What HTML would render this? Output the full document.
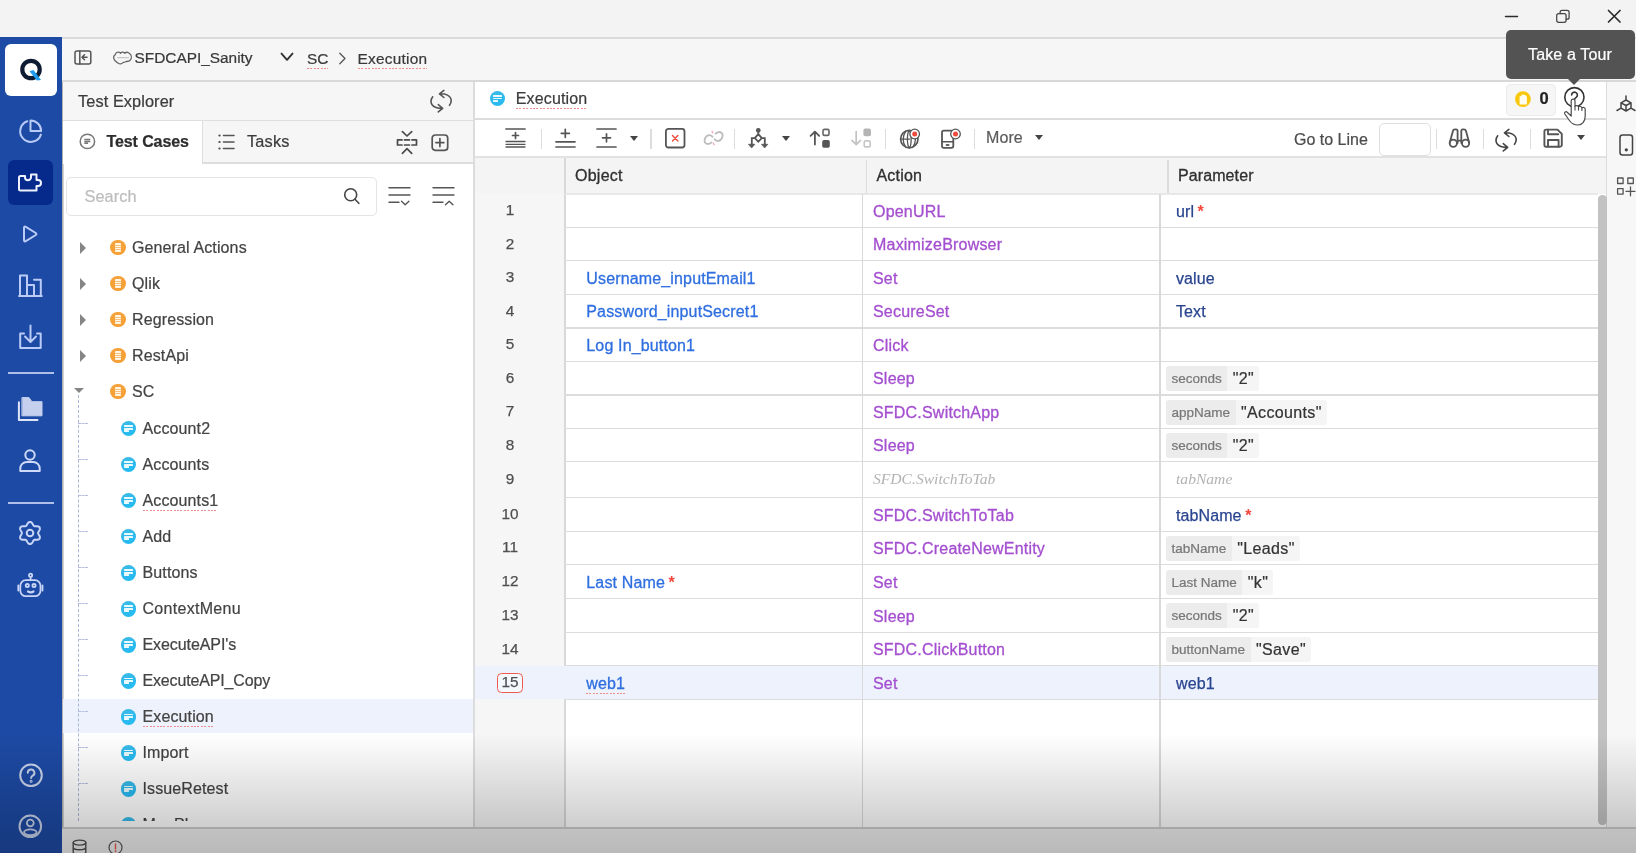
<!DOCTYPE html>
<html>
<head>
<meta charset="utf-8">
<title>Execution</title>
<style>
*{box-sizing:border-box;margin:0;padding:0}
html,body{width:1636px;height:853px;overflow:hidden}
body{font-family:"Liberation Sans",sans-serif;font-size:16px;color:#3a3a3a;background:#f3f3f3;position:relative}
.abs{position:absolute}
.t{position:absolute;white-space:pre;line-height:20px;height:20px}
svg{position:absolute;overflow:visible}
.sq{height:22px!important;background-image:repeating-linear-gradient(90deg,#ef8d8d 0,#ef8d8d 2px,transparent 2px,transparent 3.4px);background-size:100% 1.2px;background-repeat:no-repeat;background-position:0 19.3px}
#sb{left:0;top:37px;width:62px;height:816px;background:#1d4aa4}
#sb svg{fill:none;stroke:#dfe6f7;stroke-width:2;stroke-linecap:round;stroke-linejoin:round}
.ic{fill:none;stroke:#555;stroke-width:1.5;stroke-linecap:round;stroke-linejoin:round}
.tr{position:absolute;left:63px;width:410px;height:36px}
.tr .lbl{position:absolute;top:9px;line-height:20px;white-space:pre;color:#444;letter-spacing:.12px}
.fo{position:absolute;width:15.6px;height:15.6px;border-radius:50%;background:radial-gradient(circle at 50% 40%,#f4a444 0,#f5a033 70%,#f39a22 100%);left:47.3px;top:10.2px}
.fo:after{content:"";position:absolute;left:4.6px;top:3.3px;width:6.6px;height:9px;border-radius:1px;background:linear-gradient(to bottom,#fff6e6 0,#fff6e6 1.9px,#f8c27c 1.9px,#f8c27c 2.7px,#fff6e6 2.7px,#fff6e6 4.1px,#f8c27c 4.1px,#f8c27c 4.9px,#fff6e6 4.9px,#fff6e6 6.3px,#f8c27c 6.3px,#f8c27c 7.1px,#fff6e6 7.1px)}
.tc{position:absolute;width:15.6px;height:15.6px;border-radius:50%;background:linear-gradient(160deg,#3dbbe6 0,#2cb9ee 60%,#22bdf2 100%);left:57.7px;top:11.2px}
.tc i{position:absolute;left:3.5px;height:1.7px;background:#e9fbff;border-radius:.5px}
.ar{position:absolute;left:17px;top:12.3px;width:0;height:0;border-left:6.5px solid #858585;border-top:6.2px solid transparent;border-bottom:6.2px solid transparent}
.dash{position:absolute;left:15px;top:13.5px;width:10px;border-top:1px dashed #b4c0de}
.num{position:absolute;left:475px;width:70px;text-align:center;color:#4f4f4f;font-size:15.3px;-webkit-text-stroke:.25px #4f4f4f;line-height:20px;height:20px}
.obj{position:absolute;left:586.3px;color:#2f6fe0;letter-spacing:.15px;-webkit-text-stroke:.3px #2f6fe0;line-height:20px;height:20px;white-space:pre}
.act{position:absolute;left:873px;color:#a44fd0;letter-spacing:.2px;-webkit-text-stroke:.3px #a44fd0;line-height:20px;height:20px;white-space:pre}
.par{position:absolute;left:1176px;color:#2a4590;letter-spacing:.1px;-webkit-text-stroke:.25px #2a4590;line-height:20px;height:20px;white-space:pre}
.star{-webkit-text-stroke:0;color:#f4453a;font-size:16px;font-weight:700;margin-left:3.5px}
.chip{position:absolute;left:1166px;height:25px;border-radius:3px;background:#f5f5f5;display:flex;align-items:center;white-space:pre}
.chip b{font-weight:400;font-size:13.5px;color:#777;background:#ececec;height:25px;line-height:25px;padding:0 5.5px;border-radius:3px 0 0 3px}
.chip span{font-size:16px;color:#333;padding:0 5px 0 5.5px;line-height:25px;letter-spacing:.35px}
.hl{position:absolute;left:565px;width:1033px;height:1.3px;background:#dcdcdc}
.vl{position:absolute;top:194px;width:1.3px;height:633px;background:#d9d9d9}
.ital{-webkit-text-stroke:0!important;letter-spacing:0!important;font-family:"Liberation Serif",serif;font-style:italic;color:#b3b3b3;font-size:15.6px}
#all{position:absolute;left:0;top:0;width:1636px;height:853px;overflow:hidden;will-change:transform;-webkit-text-stroke:.22px}
</style>
</head>
<body>
<div id="all">
<!-- title bar -->
<div class="abs" style="left:0;top:0;width:1636px;height:37px;background:#f3f3f3"></div>
<div class="abs" style="left:62px;top:37px;width:1574px;height:1.5px;background:#dadada"></div>
<svg style="left:1500px;top:6px" width="130" height="22" viewBox="0 0 130 22" fill="none" stroke="#2b2b2b" stroke-width="1.5" stroke-linecap="round">
<path d="M5.5 10.5h12"/>
<rect x="56.7" y="7.7" width="9.4" height="8.6" rx="2" stroke-width="1.25" stroke="#444"/><path d="M60.1 7.7V6.4a2 2 0 0 1 2-2h5a2 2 0 0 1 2 2v4.8a2 2 0 0 1-2 2h-1" stroke-width="1.25" stroke="#444"/>
<path d="M108.5 4.5l11.5 11.5M120 4.5l-11.5 11.5" stroke-width="1.7"/>
</svg>
<!-- breadcrumb -->
<div class="abs" style="left:62px;top:38.5px;width:1574px;height:42px;background:#f6f6f6"></div>
<div class="abs" style="left:62px;top:80px;width:1574px;height:1.6px;background:#d8d8d8"></div>
<svg class="ic" style="left:74.3px;top:50px;stroke:#555;stroke-width:1.5" width="18" height="15" viewBox="0 0 18 15"><rect x="1" y="1" width="15.8" height="13" rx="2"/><path d="M5.8 1v13M13 7.3H8.5M10.5 4.8L8 7.3l2.5 2.5"/></svg>
<svg class="ic" style="left:112.5px;top:50.5px;stroke:#666;stroke-width:1.3" width="19" height="14" viewBox="0 0 19 14"><path d="M1.2 8.5C.3 6.5 1 4.5 2.2 3.8 2.5 1.8 4.5.6 6.3 1.3c.6.3 1 .6 1.3.9C8.5 1 10.5.7 11.8 2.2 13 1.2 15.2 1.2 16.6 2.6c1.9 1.6 2.2 4.4.9 6.2-1 1.4-2.7 1.8-4.3 1.7-1.2.8-2.4 1-3.2 1-1 1.5-3.2 1.9-4.7.8C3.8 11.2 2 10.2 1.2 8.5z"/><path d="M4.5 6.7h11" style="stroke:#b5b5b5;stroke-width:.9"/></svg>
<div class="t" style="left:134.5px;top:48px;font-size:15.4px;letter-spacing:0">SFDCAPI_Sanity</div>
<svg class="ic" style="left:280px;top:52px;stroke:#333;stroke-width:1.9" width="14" height="10" viewBox="0 0 14 10"><path d="M1.5 1.6L7 7.8l5.5-6.2"/></svg>
<div class="t sq" style="left:307px;top:49px;font-size:15.4px">SC</div>
<svg class="ic" style="left:338px;top:52px;stroke-width:1.3" width="9" height="13" viewBox="0 0 9 13"><path d="M1.8 1.3L7 6.5 1.8 11.7"/></svg>
<div class="t sq" style="left:357.5px;top:49px;font-size:15.4px;letter-spacing:.25px">Execution</div>
<!-- tooltip -->
<div class="abs" style="left:1506px;top:30px;width:129px;height:48.5px;background:#535353;border-radius:5px;z-index:60"></div>
<div class="abs" style="left:1567.4px;top:78px;width:0;height:0;border-left:7px solid transparent;border-right:7px solid transparent;border-top:7.8px solid #535353;z-index:60"></div>
<div class="t" style="left:1528px;top:44.5px;color:#fff;letter-spacing:.15px;z-index:61">Take a Tour</div>

<!-- SIDEBAR -->
<div class="abs" id="sb">
<div class="abs" style="left:5px;top:7px;width:52px;height:52px;background:#fff;border-radius:6px"></div>
<svg style="left:19px;top:20px" width="26" height="28" viewBox="0 0 26 28"><circle cx="12" cy="12.5" r="8.7" style="stroke:#0d1b33;stroke-width:4.2"/><path d="M10.5 14.2l4-1.3 7.5 10.2-4 .3z" style="fill:#1e9cf0;stroke:none"/></svg>
<div class="abs" style="left:8px;top:123.4px;width:45px;height:44.5px;background:#062a8c;border-radius:6px"></div>
<svg style="left:0;top:0;stroke:#b9cbf6" width="62" height="120" viewBox="0 37 62 120"><path d="M27.3 121.3A10.6 10.6 0 1 0 40.9 134.6"/><path d="M30.5 120.4v10.6h10.6A10.6 10.6 0 0 0 30.5 120.4z"/></svg>
<svg style="left:0;top:120px;stroke:#eef2ff" width="62" height="60" viewBox="0 157 62 60"><path d="M20.5 176H25v1.2a3 3 0 0 0 6 0V174.5h5.5V180H38a3 3 0 0 1 0 6h-1.5v4.6h-16a1.5 1.5 0 0 1-1.5-1.5V177.5a1.5 1.5 0 0 1 1.5-1.5z"/></svg>
<svg style="left:0;top:180px;stroke:#b9cbf6" width="62" height="140" viewBox="0 217 62 140"><path d="M24 227.8v12.4c0 1 1 1.5 1.8 1l10-6.2c.8-.5.8-1.5 0-2l-10-6.2c-.8-.5-1.8 0-1.8 1z"/><path d="M20 296V275.5h7V296M27 285h7v11M34 279.8h6.8V296M19 296h22.8"/><path d="M30.5 325.5v16M25 336.5l5.5 5.5 5.5-5.5M21 333.5h-0.8v14.5h20.5v-14.5H40M21 333.5h3M40 333.5h-3"/></svg>
<div class="abs" style="left:8px;top:335.4px;width:46px;height:1.3px;background:#aebfea"></div>
<svg style="left:0;top:350px;stroke:#dfe6fa" width="62" height="90" viewBox="0 387 62 90"><path d="M22.3 397.6h6.7l2.9 4.1h10.1v14.1H22.3z" style="fill:#c5d0ee;stroke:#c5d0ee;stroke-width:1"/><path d="M18.9 402.3v17.6h18.6"/><circle cx="30" cy="455" r="4.7" style="stroke:#cfdaf8"/><path d="M20.3 471v-2.5a6.5 6.5 0 0 1 6.5-6.5h6.4a6.5 6.5 0 0 1 6.5 6.5V471z" style="stroke:#cfdaf8"/></svg>
<div class="abs" style="left:8px;top:465.4px;width:46px;height:1.3px;background:#aebfea"></div>
<svg style="left:18.2px;top:483.9px;stroke:#c9d6f7" width="24" height="24" viewBox="0 0 24 24"><circle cx="12" cy="12" r="3.3"/><path d="M20.1 12.00 L20.16 12.43 L20.34 12.88 L20.61 13.36 L20.94 13.9 L21.27 14.48 L21.57 15.11 L21.79 15.76 L21.88 16.4 L21.82 17.01 L21.61 17.55 L21.25 18.01 L20.75 18.36 L20.15 18.6 L19.48 18.73 L18.79 18.79 L18.11 18.79 L17.49 18.78 L16.93 18.78 L16.45 18.85 L16.05 19.01 L15.71 19.28 L15.41 19.66 L15.12 20.14 L14.82 20.69 L14.48 21.27 L14.09 21.84 L13.64 22.35 L13.13 22.75 L12.58 23.01 L12.00 23.1 L11.42 23.01 L10.87 22.75 L10.36 22.35 L9.91 21.84 L9.52 21.27 L9.18 20.69 L8.88 20.14 L8.59 19.66 L8.29 19.28 L7.95 19.01 L7.55 18.85 L7.07 18.78 L6.51 18.78 L5.89 18.79 L5.21 18.79 L4.52 18.73 L3.85 18.6 L3.25 18.36 L2.75 18.01 L2.39 17.55 L2.18 17.01 L2.12 16.4 L2.21 15.76 L2.43 15.11 L2.73 14.48 L3.06 13.9 L3.39 13.36 L3.66 12.88 L3.84 12.43 L3.9 12.00 L3.84 11.57 L3.66 11.12 L3.39 10.64 L3.06 10.1 L2.73 9.52 L2.43 8.89 L2.21 8.24 L2.12 7.6 L2.18 6.99 L2.39 6.45 L2.75 5.99 L3.25 5.64 L3.85 5.4 L4.52 5.27 L5.21 5.21 L5.89 5.21 L6.51 5.22 L7.07 5.22 L7.55 5.15 L7.95 4.99 L8.29 4.72 L8.59 4.34 L8.88 3.86 L9.18 3.31 L9.52 2.73 L9.91 2.16 L10.36 1.65 L10.87 1.25 L11.42 0.99 L12.00 0.9 L12.58 0.99 L13.13 1.25 L13.64 1.65 L14.09 2.16 L14.48 2.73 L14.82 3.31 L15.12 3.86 L15.41 4.34 L15.71 4.72 L16.05 4.99 L16.45 5.15 L16.93 5.22 L17.49 5.22 L18.11 5.21 L18.79 5.21 L19.48 5.27 L20.15 5.4 L20.75 5.64 L21.25 5.99 L21.61 6.45 L21.82 6.99 L21.88 7.6 L21.79 8.24 L21.57 8.89 L21.27 9.52 L20.94 10.1 L20.61 10.64 L20.34 11.12 L20.16 11.57Z"/></svg>
<svg style="left:0;top:530px;stroke:#c9d6f7;stroke-width:1.8" width="62" height="40" viewBox="0 567 62 40"><circle cx="30.6" cy="575.3" r="1.6"/><path d="M30.6 577v3"/><rect x="20.3" y="580.2" width="20.2" height="16" rx="5.5"/><path d="M18.3 585.5v5M42.5 585.5v5"/><circle cx="27.3" cy="585.6" r="1.6"/><circle cx="34" cy="585.6" r="1.6"/><path d="M28 591.5c1.7 1 3.8 1 5.5 0" style="stroke-width:2.2"/></svg>
<svg style="left:0;top:720px;stroke:#c9d3ec" width="62" height="96" viewBox="0 757 62 96"><circle cx="31" cy="775.3" r="10.8"/><path d="M27.8 772.8a3.3 3.3 0 1 1 4.9 2.9c-1 .6-1.6 1.2-1.6 2.3"/><circle cx="31.1" cy="781.3" r=".5"/><circle cx="30.3" cy="826.3" r="10.8"/><circle cx="30.3" cy="823" r="3.4" style="stroke-width:1.8"/><ellipse cx="30.3" cy="832.3" rx="6.3" ry="2.9" style="stroke-width:1.8"/></svg>
</div>

<div class="abs" style="left:63px;top:81.6px;width:411px;height:746px;background:#fff"></div>
<div class="abs" style="left:473.2px;top:81.6px;width:1.6px;height:746px;background:#dcdcdc"></div>
<div class="abs" style="left:62px;top:81.6px;width:2px;height:746px;background:linear-gradient(to right,#a2a2a2,#e2e2e2)"></div>
<div class="abs" style="left:63px;top:81.6px;width:410px;height:38.4px;background:#f6f6f6"></div>
<div class="abs" style="left:63px;top:119.6px;width:410px;height:1.4px;background:#dedede"></div>
<div class="t" style="left:78px;top:91px;font-size:16.3px;letter-spacing:.1px;color:#3c3c3c">Test Explorer</div>
<svg class="ic" style="left:430px;top:90px;stroke:#555;stroke-width:1.6" width="23" height="23" viewBox="0 0 23 23"><path d="M13.9 .4L9.5 3.8l4.4 3.7M9.5 3.8C15 3.2 21.2 5.5 21.2 10.8c0 1.7-.7 3.2-1.7 4.5M8.3 14.7l4.4 3.6-4.4 3.6M12.7 18.3C7.2 18.9 1 16.6 1 11.3c0-1.7.7-3.2 1.7-4.5"/></svg>
<div class="abs" style="left:63px;top:121px;width:410px;height:42px;background:#f6f6f6"></div>
<div class="abs" style="left:63px;top:121px;width:139px;height:43px;background:#fff"></div>
<div class="abs" style="left:202px;top:121px;width:1.4px;height:42px;background:#dedede"></div>
<div class="abs" style="left:202px;top:162.3px;width:271px;height:1.4px;background:#dedede"></div>
<svg class="ic" style="left:79px;top:133.2px;stroke:#777;stroke-width:1.5" width="17" height="17" viewBox="0 0 17 17"><circle cx="8.4" cy="8.4" r="7.2"/><path d="M5.3 6.6h6M5.3 8.5h6M5.3 10.3h3.7" style="stroke-width:1.5;stroke-linecap:butt"/></svg>
<div class="t" style="left:106.5px;top:131.5px;font-weight:700;color:#2d2d2d;letter-spacing:-.1px">Test Cases</div>
<svg class="ic" style="left:218px;top:134px;stroke:#555;stroke-width:1.6" width="17" height="16" viewBox="0 0 17 16"><path d="M5.5 1.5h10.5M5.5 8h10.5M5.5 14.5h10.5"/><path d="M1.3 1.5h.4M1.3 8h.4M1.3 14.5h.4" style="stroke-width:2"/></svg>
<div class="t" style="left:247px;top:130.8px;font-size:16.3px;letter-spacing:.2px;color:#3c3c3c">Tasks</div>
<svg class="ic" style="left:396px;top:130px;stroke:#4a4a4a;stroke-width:1.7" width="22" height="25" viewBox="0 0 22 25"><path d="M6.4 1.6L11 6l4.7-4.4M6.4 23.3L11 18.7l4.7 4.6M6 9.9H1.5V15H6M16 9.9h4.5V15H16M8.5 9.9h5M8.5 15h5"/></svg>
<svg class="ic" style="left:431px;top:133.5px;stroke:#555;stroke-width:1.7" width="18" height="18" viewBox="0 0 18 18"><rect x="1.2" y="1" width="15.5" height="15.3" rx="3"/><path d="M8.9 4.6v8M4.9 8.6h8"/></svg>
<div class="abs" style="left:66px;top:177px;width:311px;height:38.5px;background:#fff;border:1.3px solid #e4e4e4;border-radius:5px"></div>
<div class="t" style="left:84.5px;top:185.8px;font-size:16.3px;color:#bdbdbd;letter-spacing:.1px">Search</div>
<svg class="ic" style="left:343px;top:187px;stroke:#444;stroke-width:1.6" width="17" height="18" viewBox="0 0 17 18"><circle cx="7.7" cy="7.7" r="6"/><path d="M12 12.3l3.8 4"/></svg>
<svg class="ic" style="left:388px;top:186px;stroke:#555;stroke-width:1.4" width="23" height="21" viewBox="0 0 23 21"><path d="M1 1.7h21M1 9h21M1 16.3h10M13.5 15.3l3.7 3.5 3.7-3.5"/></svg>
<svg class="ic" style="left:432px;top:186px;stroke:#555;stroke-width:1.4" width="23" height="21" viewBox="0 0 23 21"><path d="M1 1.7h21M1 9h21M1 16.3h10M13.5 18.8l3.7-3.5 3.7 3.5"/></svg>
<div class="abs" style="left:63px;top:225px;width:410px;height:595.5px;overflow:hidden">
<div class="abs" style="left:0;top:473.8px;width:410px;height:34.4px;background:#eef2fc"></div>
<div class="abs" style="left:15px;top:170px;height:436px;border-left:1px dashed #a9b6d8"></div>
<div class="tr" style="left:0;top:4.5px">
<div class="ar"></div>
<div class="fo"></div><div class="lbl" style="left:69px;top:8.4px">General Actions</div></div>
<div class="tr" style="left:0;top:40.5px">
<div class="ar"></div>
<div class="fo"></div><div class="lbl" style="left:69px;top:8.4px">Qlik</div></div>
<div class="tr" style="left:0;top:76.6px">
<div class="ar"></div>
<div class="fo"></div><div class="lbl" style="left:69px;top:8.4px">Regression</div></div>
<div class="tr" style="left:0;top:112.6px">
<div class="ar"></div>
<div class="fo"></div><div class="lbl" style="left:69px;top:8.4px">RestApi</div></div>
<div class="tr" style="left:0;top:148.6px">
<div class="abs" style="left:10.6px;top:14.8px;width:0;height:0;border-top:5.8px solid #858585;border-left:5.2px solid transparent;border-right:5.2px solid transparent"></div>
<div class="fo"></div><div class="lbl" style="left:69px;top:8.4px">SC</div></div>
<div class="tr" style="left:0;top:184.7px"><div class="dash"></div><div class="tc"><i style="top:4.45px;width:8.6px"></i><i style="top:6.95px;width:8.6px"></i><i style="top:9.25px;width:4.8px"></i></div><div class="lbl" style="left:79.5px;letter-spacing:0.12px">Account2</div></div>
<div class="tr" style="left:0;top:220.7px"><div class="dash"></div><div class="tc"><i style="top:4.45px;width:8.6px"></i><i style="top:6.95px;width:8.6px"></i><i style="top:9.25px;width:4.8px"></i></div><div class="lbl" style="left:79.5px;letter-spacing:0.12px">Accounts</div></div>
<div class="tr" style="left:0;top:256.7px"><div class="dash"></div><div class="tc"><i style="top:4.45px;width:8.6px"></i><i style="top:6.95px;width:8.6px"></i><i style="top:9.25px;width:4.8px"></i></div><div class="lbl sq" style="left:79.5px;letter-spacing:0.12px">Accounts1</div></div>
<div class="tr" style="left:0;top:292.7px"><div class="dash"></div><div class="tc"><i style="top:4.45px;width:8.6px"></i><i style="top:6.95px;width:8.6px"></i><i style="top:9.25px;width:4.8px"></i></div><div class="lbl" style="left:79.5px;letter-spacing:0.12px">Add</div></div>
<div class="tr" style="left:0;top:328.8px"><div class="dash"></div><div class="tc"><i style="top:4.45px;width:8.6px"></i><i style="top:6.95px;width:8.6px"></i><i style="top:9.25px;width:4.8px"></i></div><div class="lbl" style="left:79.5px;letter-spacing:0.12px">Buttons</div></div>
<div class="tr" style="left:0;top:364.8px"><div class="dash"></div><div class="tc"><i style="top:4.45px;width:8.6px"></i><i style="top:6.95px;width:8.6px"></i><i style="top:9.25px;width:4.8px"></i></div><div class="lbl" style="left:79.5px;letter-spacing:0.3px">ContextMenu</div></div>
<div class="tr" style="left:0;top:400.8px"><div class="dash"></div><div class="tc"><i style="top:4.45px;width:8.6px"></i><i style="top:6.95px;width:8.6px"></i><i style="top:9.25px;width:4.8px"></i></div><div class="lbl" style="left:79.5px;letter-spacing:-0.08px">ExecuteAPI's</div></div>
<div class="tr" style="left:0;top:436.9px"><div class="dash"></div><div class="tc"><i style="top:4.45px;width:8.6px"></i><i style="top:6.95px;width:8.6px"></i><i style="top:9.25px;width:4.8px"></i></div><div class="lbl" style="left:79.5px;letter-spacing:-0.15px">ExecuteAPI_Copy</div></div>
<div class="tr" style="left:0;top:472.9px"><div class="dash"></div><div class="tc"><i style="top:4.45px;width:8.6px"></i><i style="top:6.95px;width:8.6px"></i><i style="top:9.25px;width:4.8px"></i></div><div class="lbl sq" style="left:79.5px;letter-spacing:0.12px">Execution</div></div>
<div class="tr" style="left:0;top:508.9px"><div class="dash"></div><div class="tc"><i style="top:4.45px;width:8.6px"></i><i style="top:6.95px;width:8.6px"></i><i style="top:9.25px;width:4.8px"></i></div><div class="lbl" style="left:79.5px;letter-spacing:0.12px">Import</div></div>
<div class="tr" style="left:0;top:544.9px"><div class="dash"></div><div class="tc"><i style="top:4.45px;width:8.6px"></i><i style="top:6.95px;width:8.6px"></i><i style="top:9.25px;width:4.8px"></i></div><div class="lbl" style="left:79.5px;letter-spacing:0.12px">IssueRetest</div></div>
<div class="tr" style="left:0;top:581.0px"><div class="tc"><i style="top:4.45px;width:8.6px"></i><i style="top:6.95px;width:8.6px"></i><i style="top:9.25px;width:4.8px"></i></div><div class="lbl" style="left:79.5px;letter-spacing:0.12px">MapPlan</div></div>
</div><!-- MAIN -->
<div class="abs" style="left:474.8px;top:81.6px;width:1131.5px;height:746px;background:#fff"></div>
<div class="abs" style="left:1606px;top:81.6px;width:30px;height:746px;background:#f7f7f7"></div>
<div class="abs" style="left:1605.8px;top:81.6px;width:1.6px;height:746px;background:#dcdcdc"></div>
<div class="tc" style="left:489.7px;top:90.7px"><i style="top:4.45px;width:8.6px"></i><i style="top:6.95px;width:8.6px"></i><i style="top:9.25px;width:4.8px"></i></div>
<div class="t sq" style="left:515.8px;top:89.1px;font-size:16px;letter-spacing:.15px;color:#3c3c3c">Execution</div>
<div class="abs" style="left:475px;top:118.3px;width:1131px;height:1.6px;background:#dcdcdc"></div>
<div class="abs" style="left:1505.8px;top:83.5px;width:50.3px;height:32.8px;background:#f6f6f6;border:1.2px solid #ebebeb;border-radius:4.5px"></div>
<svg style="left:0;top:0" width="1" height="1" viewBox="0 0 1 1"><circle cx="1522.9" cy="99.1" r="7.9" fill="#f9c80e"/><path d="M1519.6 96.2h1.8v-1.4h3.6l1.9 1.9v7.8h-7.3z" fill="#fffdf0"/></svg>
<div class="t" style="left:1539.5px;top:88px;font-weight:700;font-size:16.5px;color:#222">0</div>
<svg class="ic" style="left:0;top:0;stroke:#333;stroke-width:1.6" width="1" height="1" viewBox="0 0 1 1"><circle cx="1574.4" cy="97.2" r="9.6"/><path d="M1571.6 95a2.9 2.9 0 1 1 4.3 2.6c-.9.5-1.5 1-1.5 2.1"/></svg>
<svg style="left:0;top:0;z-index:70" width="1" height="1" viewBox="0 0 1 1"><path d="M1571.2 112.5V100.8c0-2.2 3.8-2.2 3.8 0v5.4c.6-1 3.4-.8 3.5.8.7-1 3.3-.7 3.4.9.7-.9 3.3-.6 3.3 1.3V116c0 5-2.7 9-7.2 9-4 0-6-1-8.2-4l-5-7c-1-1.5 1-3 2.4-1.8l4 3.8z" fill="#fff" stroke="#4a4a4a" stroke-width="1.2" stroke-linejoin="round"/><path d="M1575 106v4.5M1578.5 107v3.5M1581.9 108v3" stroke="#4a4a4a" stroke-width="1.1" fill="none"/></svg>
<svg class="ic" style="left:505px;top:127px;stroke:#555;stroke-width:1.7" width="21" height="22" viewBox="0 0 21 22"><path d="M1 2h19M10.5 5.5v6M7.5 8.5h6"/><path d="M1 14.5h19M1 17.3h19M1 20h19" style="stroke-width:1.3"/></svg>
<div class="abs" style="left:540.6px;top:129px;width:1.4px;height:20px;background:#dcdcdc"></div>
<svg class="ic" style="left:555px;top:127px;stroke:#555;stroke-width:1.7" width="21" height="22" viewBox="0 0 21 22"><path d="M10.3 2.3v8M6.3 6.3h8M1 14.8h19M1 20h19"/></svg>
<svg class="ic" style="left:596px;top:127px;stroke:#555;stroke-width:1.7" width="21" height="22" viewBox="0 0 21 22"><path d="M1 2h19M10.5 6.8v8M6.5 10.8h8M1 20h19"/></svg>
<div class="abs" style="left:630px;top:135.5px;width:0;height:0;border-top:5.3px solid #444;border-left:4.7px solid transparent;border-right:4.7px solid transparent"></div>
<div class="abs" style="left:650.3px;top:129px;width:1.4px;height:20px;background:#dcdcdc"></div>
<svg class="ic" style="left:665px;top:128px;stroke:#555;stroke-width:1.8" width="21" height="21" viewBox="0 0 21 21"><rect x=".9" y=".9" width="18.6" height="18.6" rx="2.5"/><path d="M7.5 7.5l5.4 5.4M12.9 7.5l-5.4 5.4" style="stroke:#ee4b3b;stroke-width:1.4"/></svg>
<svg class="ic" style="left:0;top:0;stroke:#bcbcbc;stroke-width:1.8" width="1" height="1" viewBox="0 0 1 1"><path d="M712.6 136.8C711 134.6 708.5 134.6 706.8 136 704.2 138.2 704 141.5 705.5 143c1.5 1.6 4.3 1.2 6.1-.6M714.6 139.2c1.6 2.2 4.1 2.2 5.8.8 2.6-2.2 2.8-5.5 1.3-7-1.5-1.6-4.3-1.2-6.1.6"/><path d="M712 131.3l.8 1.5M713.4 143.3l.8 1.5" style="stroke:#f3a3b3;stroke-width:1.3"/></svg>
<div class="abs" style="left:733.8px;top:129px;width:1.4px;height:20px;background:#dcdcdc"></div>
<svg class="ic" style="left:0;top:0;stroke:#555;stroke-width:1.8" width="1" height="1" viewBox="0 0 1 1"><circle cx="758.3" cy="130.3" r="1.5" style="fill:#777"/><path d="M758.3 131.5v2.7M758.3 134.2l3.5 3.9-3.5 3.7-3.5-3.7zM754.8 138.1h-3v6.5M761.8 138.1h3v6.5" style="stroke-linejoin:miter"/><path d="M748.8 144.3h6l-3 3.4zM761.8 144.3h6l-3 3.4z" style="fill:#555;stroke-width:.8"/></svg>
<div class="abs" style="left:782px;top:135.5px;width:0;height:0;border-top:5.3px solid #444;border-left:4.7px solid transparent;border-right:4.7px solid transparent"></div>
<svg class="ic" style="left:0;top:0;stroke:#555;stroke-width:1.8" width="1" height="1" viewBox="0 0 1 1"><path d="M814.9 144.5V132M810.6 135.9l4.3-4.3 4.3 4.3"/><rect x="823" y="129.4" width="6" height="6" rx="1.5" style="stroke:#666;stroke-width:1.6"/><rect x="822.2" y="140.1" width="7.6" height="7.6" rx="1.8" style="fill:#555;stroke:none"/></svg>
<svg class="ic" style="left:0;top:0;stroke:#c3c3c3;stroke-width:1.7" width="1" height="1" viewBox="0 0 1 1"><path d="M856.2 131.5v13M851.9 140.3l4.3 4.3 4.3-4.3"/><rect x="863.4" y="128.6" width="7.6" height="7.6" rx="1.8" style="fill:#b4b4b4;stroke:none"/><rect x="864.2" y="140.9" width="6" height="6" rx="1.5" style="stroke:#c6c6c6;stroke-width:1.6"/></svg>
<div class="abs" style="left:884.7px;top:129px;width:1.4px;height:20px;background:#dcdcdc"></div>
<svg class="ic" style="left:0;top:0;stroke:#555;stroke-width:1.7" width="1" height="1" viewBox="0 0 1 1"><circle cx="909.3" cy="139.1" r="8.7"/><path d="M900.6 139.1h9M909.3 130.4c-2.5 2.5-2.5 15 0 17.4M909.3 130.4c2.5 2.5 2.5 15 0 17.4M905.8 131.3c-3.5 4.5-3.5 11.5 0 15.8M912.8 131.3c3.5 4.5 3.5 11.5 0 15.8" style="stroke-width:1.3"/><circle cx="914.7" cy="134" r="4.8" style="fill:#fff;stroke-width:1.3"/><circle cx="914.7" cy="134" r="2.5" style="fill:#f04a3a;stroke:none"/></svg>
<svg class="ic" style="left:0;top:0;stroke:#555;stroke-width:1.8" width="1" height="1" viewBox="0 0 1 1"><rect x="942" y="130.6" width="11.3" height="17.3" rx="1.8"/><path d="M942 141.8h11.3" style="stroke-width:1.5"/><ellipse cx="947.6" cy="145" rx="1.5" ry=".5" style="stroke-width:1.2"/><circle cx="955.5" cy="134" r="4.8" style="fill:#fff;stroke-width:1.3"/><circle cx="955.5" cy="134" r="2.5" style="fill:#f04a3a;stroke:none"/></svg>
<div class="abs" style="left:973.5px;top:129px;width:1.4px;height:20px;background:#dcdcdc"></div>
<div class="t" style="left:986px;top:127.5px;font-size:16px;letter-spacing:.1px;color:#5c5c5c">More</div>
<div class="abs" style="left:1035px;top:134.8px;width:0;height:0;border-top:5.3px solid #444;border-left:4.7px solid transparent;border-right:4.7px solid transparent"></div>
<div class="t" style="left:1294px;top:130px;font-size:16px;color:#4c4c4c">Go to Line</div>
<div class="abs" style="left:1379px;top:123px;width:51.5px;height:33px;background:#fff;border:1.3px solid #dfdfdf;border-radius:5px"></div>
<div class="abs" style="left:1435.5px;top:129px;width:1.4px;height:20px;background:#dcdcdc"></div>
<svg class="ic" style="left:0;top:0;stroke:#555;stroke-width:1.8" width="1" height="1" viewBox="0 0 1 1"><circle cx="1453.3" cy="143.3" r="3.6"/><circle cx="1465.6" cy="143.3" r="3.6"/><path d="M1449.7 142.8l3.3-12c.3-1.1 1-1.4 2-1.4h1c1 0 1.6.6 1.6 1.6v12M1469.2 142.8l-3.3-12c-.3-1.1-1-1.4-2-1.4h-1c-1 0-1.6.6-1.6 1.6v12M1457.6 140.6h3.7"/></svg>
<div class="abs" style="left:1482.7px;top:129px;width:1.4px;height:20px;background:#dcdcdc"></div>
<svg class="ic" style="left:1495.2px;top:128.8px;stroke:#444;stroke-width:1.6" width="23" height="23" viewBox="0 0 23 23"><path d="M13.9 .4L9.5 3.8l4.4 3.7M9.5 3.8C15 3.2 21.2 5.5 21.2 10.8c0 1.7-.7 3.2-1.7 4.5M8.3 14.7l4.4 3.6-4.4 3.6M12.7 18.3C7.2 18.9 1 16.6 1 11.3c0-1.7.7-3.2 1.7-4.5"/></svg>
<div class="abs" style="left:1529.5px;top:129px;width:1.4px;height:20px;background:#dcdcdc"></div>
<svg class="ic" style="left:0;top:0;stroke:#555;stroke-width:1.9" width="1" height="1" viewBox="0 0 1 1"><path d="M1546.2 129.6h11.3l4.3 4.3v11a1.8 1.8 0 0 1-1.8 1.8h-13.8a1.8 1.8 0 0 1-1.8-1.8v-13.5a1.8 1.8 0 0 1 1.8-1.8z"/><path d="M1548 129.8v4.4h10.3M1548 146.6V140h10.6v6.6"/></svg>
<div class="abs" style="left:1577px;top:135px;width:0;height:0;border-top:5.3px solid #444;border-left:4.7px solid transparent;border-right:4.7px solid transparent"></div>
<div class="abs" style="left:475px;top:156.3px;width:1131px;height:1.4px;background:#e2e2e2"></div>
<svg class="ic" style="left:1615.6px;top:95.3px;stroke:#444;stroke-width:1.5" width="22" height="20" viewBox="0 0 22 20"><path d="M10 1v4M10 5l5 2.8v5.4L10 16l-5-2.8V7.8zM5 7.8l5 2.7 5-2.7M10 10.5V16M5 13.2L1 15.5M15 13.2l4 2.3"/></svg>
<svg class="ic" style="left:1619px;top:134px;stroke:#444;stroke-width:1.5" width="15" height="22" viewBox="0 0 15 22"><rect x="1" y="1" width="12.5" height="20" rx="2.5"/><circle cx="7.3" cy="15.8" r=".9" style="fill:#444"/></svg>
<svg class="ic" style="left:0;top:0;stroke:#555;stroke-width:1.3" width="1" height="1" viewBox="0 0 1 1"><rect x="1617.6" y="178" width="5.5" height="5.5"/><rect x="1627.8" y="178" width="5.5" height="5.5"/><rect x="1617.6" y="188.6" width="5.5" height="5.5"/><path d="M1626 191.3h9M1630.5 186.8v9"/></svg>
<div class="abs" style="left:475px;top:157.7px;width:1131px;height:36.5px;background:#f4f4f4"></div>
<div class="abs" style="left:475px;top:193px;width:90px;height:634px;background:#f6f6f6"></div>
<div class="abs" style="left:564.3px;top:157.7px;width:1.5px;height:670px;background:#d9d9d9"></div>
<div class="abs" style="left:866px;top:160px;width:1.4px;height:33px;background:#dddddd"></div>
<div class="abs" style="left:1167.2px;top:160px;width:1.4px;height:33px;background:#dddddd"></div>
<div class="t" style="left:575px;top:166.2px;font-size:16px;letter-spacing:.25px;color:#2f2f2f;-webkit-text-stroke:.3px #2f2f2f">Object</div>
<div class="t" style="left:876.5px;top:166.2px;font-size:16px;letter-spacing:.2px;color:#2f2f2f;-webkit-text-stroke:.3px #2f2f2f">Action</div>
<div class="t" style="left:1178px;top:166.2px;font-size:16px;letter-spacing:.1px;color:#2f2f2f;-webkit-text-stroke:.3px #2f2f2f">Parameter</div>
<div class="abs" style="left:475px;top:666px;width:1123px;height:33px;background:#edf2fd"></div>
<div class="hl" style="top:193.4px;background:#e8e8e8"></div>
<div class="hl" style="top:226.8px"></div>
<div class="hl" style="top:260.2px"></div>
<div class="hl" style="top:293.8px"></div>
<div class="hl" style="top:327.4px"></div>
<div class="hl" style="top:360.8px"></div>
<div class="hl" style="top:394.4px"></div>
<div class="hl" style="top:427.8px"></div>
<div class="hl" style="top:461.2px"></div>
<div class="hl" style="top:497.1px"></div>
<div class="hl" style="top:530.6px"></div>
<div class="hl" style="top:564.1px"></div>
<div class="hl" style="top:598.1px"></div>
<div class="hl" style="top:631.8px"></div>
<div class="hl" style="top:665.2px"></div>
<div class="hl" style="top:698.6px"></div>
<div class="vl" style="left:861.5px"></div><div class="vl" style="left:1159.3px"></div>
<div class="abs" style="left:1598.2px;top:195px;width:8.4px;height:630px;background:#c2c2c2;border-radius:4.2px"></div>
<div class="num" style="top:200.2px;left:475px">1</div>
<div class="act" style="top:202.0px">OpenURL</div>
<div class="par" style="top:202.0px">url<span class="star">*</span></div>
<div class="num" style="top:233.5px;left:475px">2</div>
<div class="act" style="top:235.3px">MaximizeBrowser</div>
<div class="num" style="top:267.0px;left:475px">3</div>
<div class="obj" style="top:268.8px">Username_inputEmail1</div>
<div class="act" style="top:268.8px">Set</div>
<div class="par" style="top:268.8px">value</div>
<div class="num" style="top:300.6px;left:475px">4</div>
<div class="obj" style="top:302.4px">Password_inputSecret1</div>
<div class="act" style="top:302.4px">SecureSet</div>
<div class="par" style="top:302.4px">Text</div>
<div class="num" style="top:334.1px;left:475px">5</div>
<div class="obj" style="top:335.9px">Log In_button1</div>
<div class="act" style="top:335.9px">Click</div>
<div class="num" style="top:367.6px;left:475px">6</div>
<div class="act" style="top:369.4px">Sleep</div>
<div class="chip" style="top:366.0px"><b>seconds</b><span>"2"</span></div>
<div class="num" style="top:401.1px;left:475px">7</div>
<div class="act" style="top:402.9px">SFDC.SwitchApp</div>
<div class="chip" style="top:399.5px"><b>appName</b><span>"Accounts"</span></div>
<div class="num" style="top:434.5px;left:475px">8</div>
<div class="act" style="top:436.3px">Sleep</div>
<div class="chip" style="top:432.9px"><b>seconds</b><span>"2"</span></div>
<div class="num" style="top:469.2px;left:475px">9</div>
<div class="act ital" style="top:468.8px">SFDC.SwitchToTab</div>
<div class="par ital" style="top:468.8px">tabName</div>
<div class="num" style="top:503.9px;left:475px">10</div>
<div class="act" style="top:505.6px">SFDC.SwitchToTab</div>
<div class="par" style="top:505.6px">tabName<span class="star">*</span></div>
<div class="num" style="top:537.4px;left:475px">11</div>
<div class="act" style="top:539.2px">SFDC.CreateNewEntity</div>
<div class="chip" style="top:535.8px"><b>tabName</b><span>"Leads"</span></div>
<div class="num" style="top:571.1px;left:475px">12</div>
<div class="obj" style="top:572.9px">Last Name<span class="star">*</span></div>
<div class="act" style="top:572.9px">Set</div>
<div class="chip" style="top:569.5px"><b>Last Name</b><span>"k"</span></div>
<div class="num" style="top:604.9px;left:475px">13</div>
<div class="act" style="top:606.7px">Sleep</div>
<div class="chip" style="top:603.3px"><b>seconds</b><span>"2"</span></div>
<div class="num" style="top:638.5px;left:475px">14</div>
<div class="act" style="top:640.3px">SFDC.ClickButton</div>
<div class="chip" style="top:636.9px"><b>buttonName</b><span>"Save"</span></div>
<div class="abs" style="left:496.5px;top:672.6px;width:26.5px;height:20.5px;border:1.6px solid #ef5a4c;border-radius:4.5px;background:#f4f8ff"></div>
<div class="num" style="top:672.0px;left:475px">15</div>
<div class="obj sq" style="top:673.8px">web1</div>
<div class="act" style="top:673.8px">Set</div>
<div class="par" style="top:673.8px">web1</div>
<div class="abs" style="left:62px;top:828px;width:1574px;height:25px;background:#efefef"></div>
<div class="abs" style="left:62px;top:827.3px;width:1574px;height:1.5px;background:#cdcdcd"></div>
<svg class="ic" style="left:71.8px;top:839px;stroke:#505050;stroke-width:1.4" width="15" height="15" viewBox="0 0 15 15"><ellipse cx="7.5" cy="3.6" rx="6.3" ry="2.5"/><path d="M1.2 3.6v9.4c0 1.4 2.8 2.5 6.3 2.5s6.3-1.1 6.3-2.5V3.6M1.2 8.3c0 1.4 2.8 2.5 6.3 2.5s6.3-1.1 6.3-2.5"/></svg>
<svg class="ic" style="left:108px;top:839.7px;stroke:#555;stroke-width:1.2" width="15" height="15" viewBox="0 0 15 15"><circle cx="7.5" cy="7.5" r="6.5"/><path d="M7.5 4v5" style="stroke:#e8584b;stroke-width:1.4"/><circle cx="7.5" cy="11.3" r=".4" style="stroke:#e8584b"/></svg>
<div class="abs" style="left:0;top:734px;width:1636px;height:119px;background:linear-gradient(to bottom,rgba(0,0,0,0) 0,rgba(0,0,0,.19) 77%,rgba(0,0,0,.225) 100%);pointer-events:none;z-index:50"></div>
</div>
</body>
</html>
